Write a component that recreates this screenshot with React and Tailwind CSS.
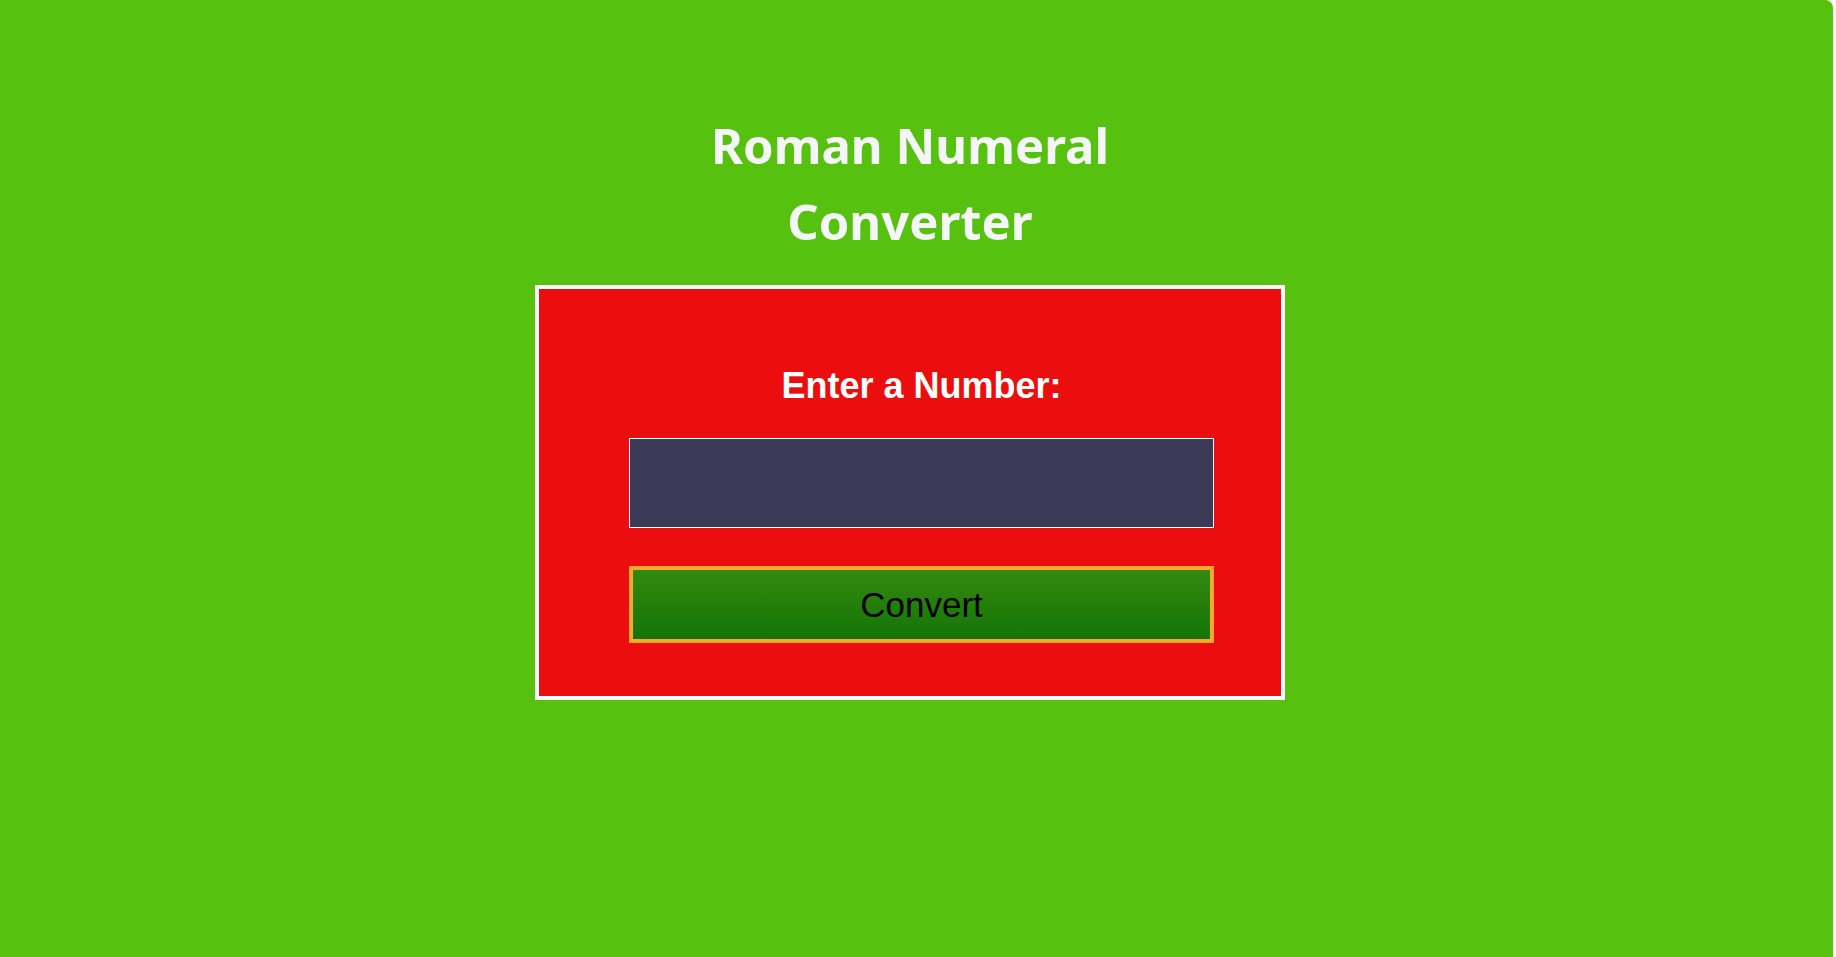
import React, { useState } from 'react';

export default function App() {
  const [value, setValue] = useState('');

  return (
    <div className="flex min-h-[957px] w-full bg-[#f7f7f7]">
      <main className="flex w-[calc(100%-3px)] flex-col items-center rounded-tr-lg bg-[#56c10f] pr-[13px] font-['Liberation_Sans',Arial,sans-serif]">
        {/* Heading */}
        <h1 className="mt-[107px] text-center font-['Comic_Sans_MS','Noto_Sans',sans-serif] text-[49px] font-bold leading-[76px] text-[#f5f6f7]">
          Roman Numeral
          <br />
          Converter
        </h1>

        {/* Converter form */}
        <form
          className="mt-[26px] flex w-[750px] flex-col border-4 border-white bg-[#ec0e0e] pt-[77px] pb-[53px] pl-[90px] pr-[67px]"
          onSubmit={(e) => e.preventDefault()}
        >
          <label htmlFor="number" className="text-center text-[36px] font-bold leading-[40px] text-white">
            Enter a Number:
          </label>
          <input
            id="number"
            type="number"
            value={value}
            onChange={(e) => setValue(e.target.value)}
            className="mt-[32px] h-[90px] w-full border border-white bg-[#3b3b58] px-3 text-[30px] text-white outline-none"
          />
          <button
            type="submit"
            className="mt-[38px] h-[77px] w-full border-4 border-[#ffa62b] bg-gradient-to-b from-[#32890f] to-[#117506] text-[35px] leading-none text-black"
          >
            Convert
          </button>
        </form>
      </main>
    </div>
  );
}
